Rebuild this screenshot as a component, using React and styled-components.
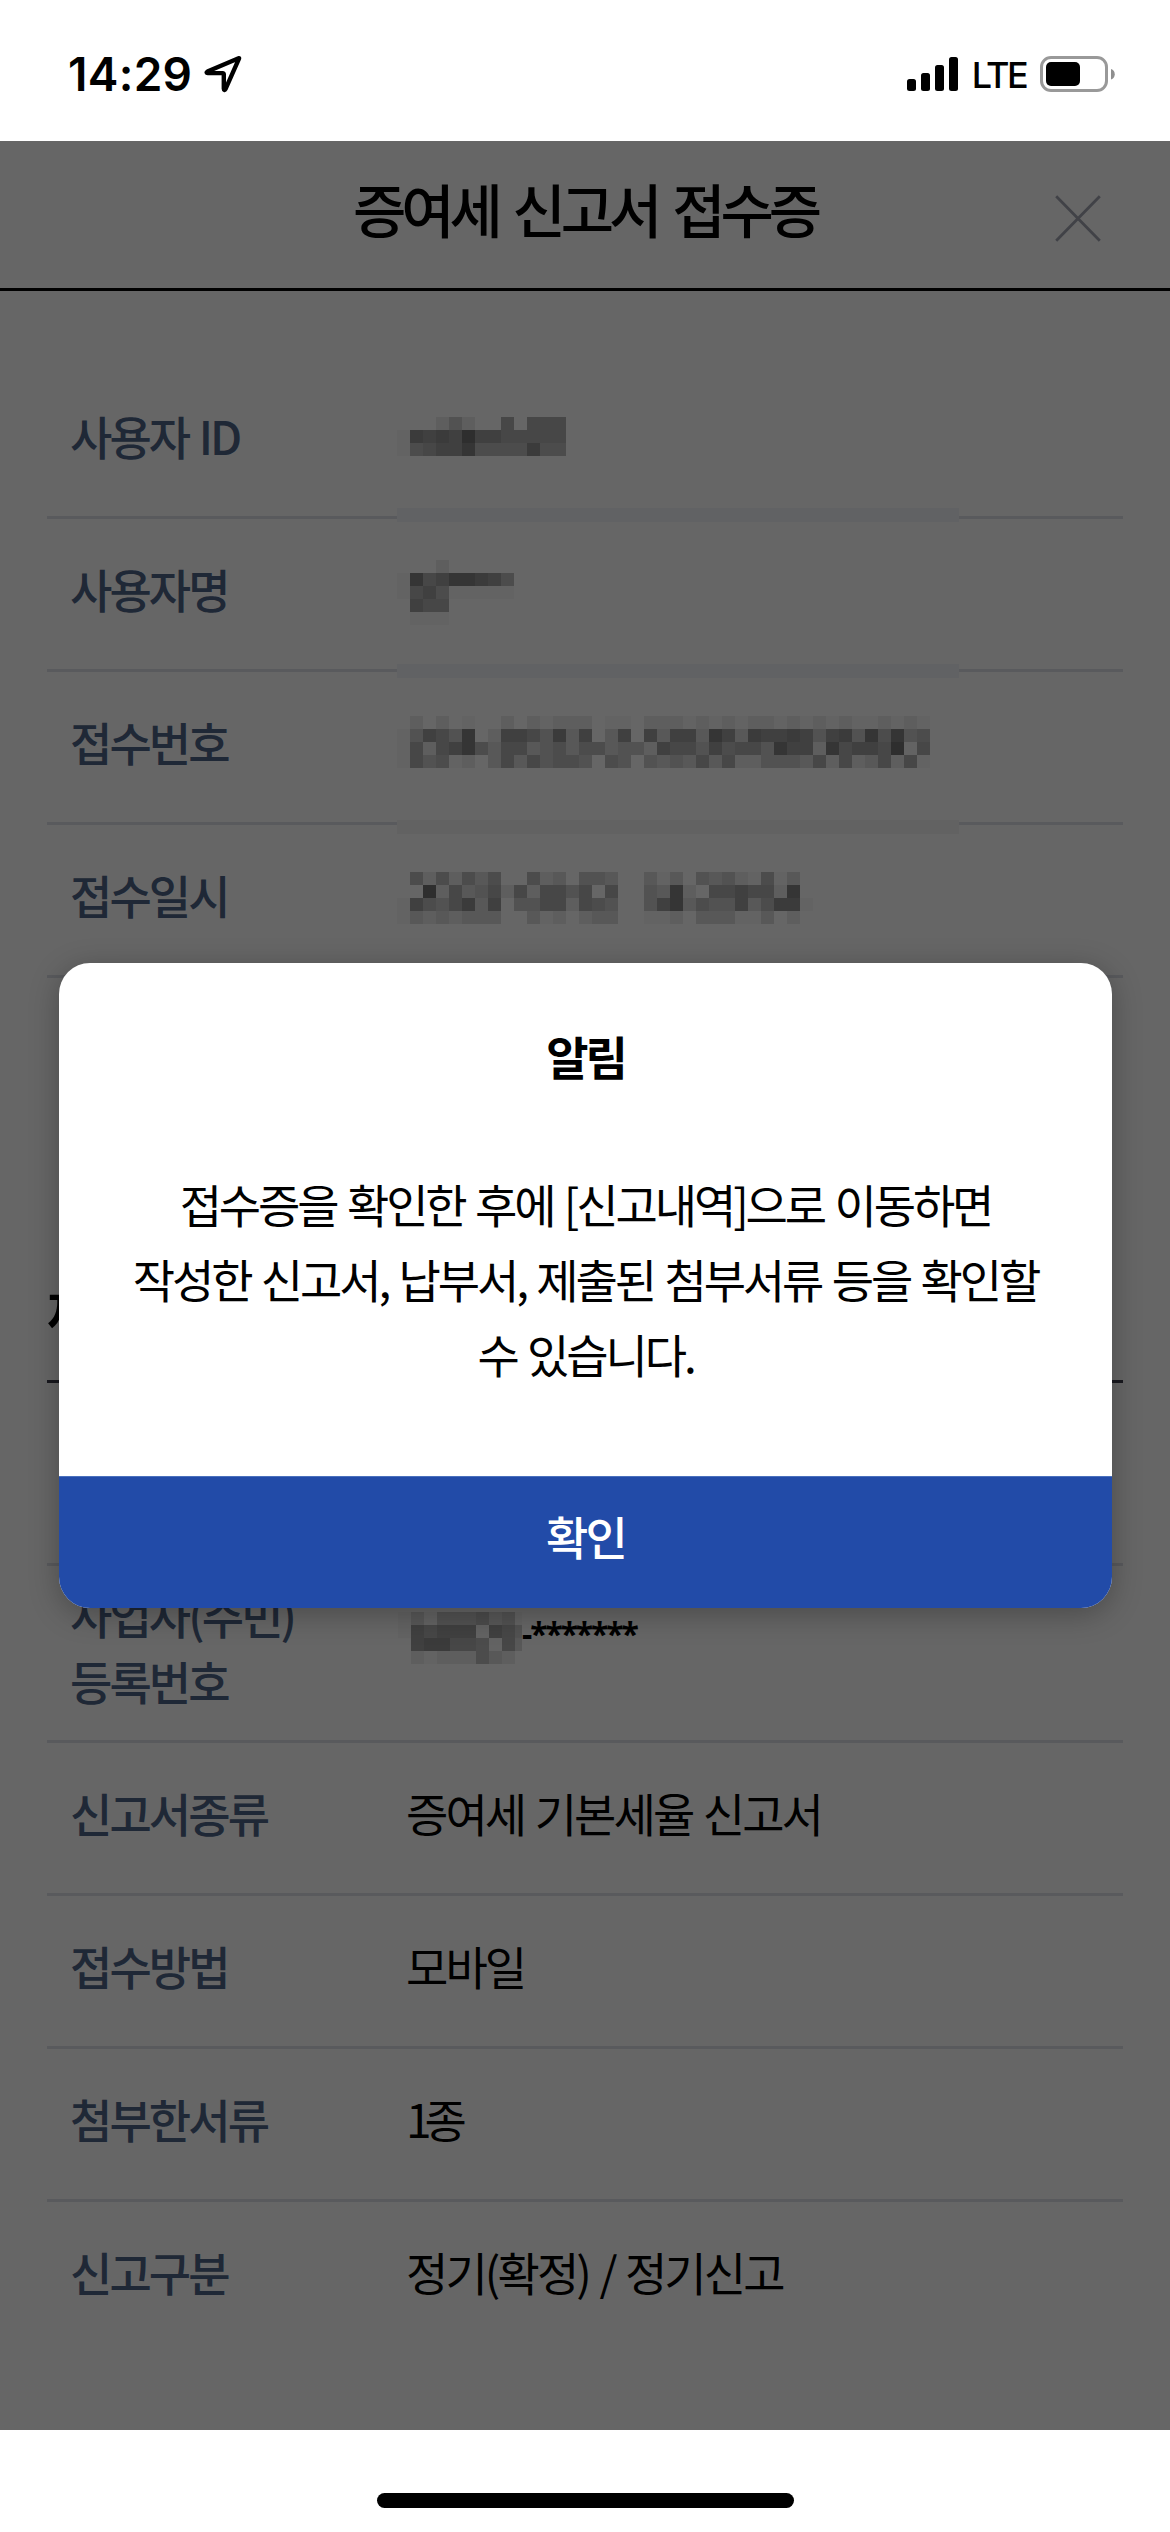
import React from "react";
import styled, { createGlobalStyle } from "styled-components";

const kr = `"Noto Sans CJK KR", "Noto Sans", sans-serif`;

const GlobalStyle = createGlobalStyle`
  * { box-sizing: border-box; }
  body { margin: 0; background: #fff; font-family: ${kr}; color: #000; }
  h1, h2, p, dl, dt, dd { margin: 0; font-weight: 400; }
  button { border: 0; padding: 0; background: none; font: inherit; color: inherit; }
`;

const Screen = styled.div`
  display: flex;
  flex-direction: column;
  width: 1170px;
  height: 2532px;
  overflow: hidden;
  background: #fff;
`;

const StatusBar = styled.div`
  display: flex;
  justify-content: space-between;
  height: 141px;
  padding: 56px 55px 0 68px;
  font-family: Inter, "Liberation Sans", sans-serif;
`;

const StatusGroup = styled.div`
  display: flex;
  align-items: center;
  height: 36px;
  gap: ${(p) => p.$gap}px;
`;

const Clock = styled.span`
  font-size: 46px;
  font-weight: 600;
  line-height: 36px;
  letter-spacing: 0.3px;
`;

const Network = styled.span`
  font-size: 36px;
  font-weight: 500;
  line-height: 38px;
  letter-spacing: -2.6px;
  padding-top: 2px;
`;

const Page = styled.main`
  position: relative;
  display: flex;
  flex-direction: column;
  height: 2289px;
  overflow: hidden;
`;

const Header = styled.header`
  display: grid;
  grid-template-columns: 170px 1fr 170px;
  height: 150px;
  border-bottom: 3px solid #000;
`;

const Title = styled.h1`
  grid-column: 2;
  text-align: center;
  font-size: 58px;
  font-weight: 500;
  line-height: 135px;
  letter-spacing: -5.1px;
  word-spacing: 6.9px;
`;

const CloseButton = styled.button`
  display: flex;
  padding: 54px 0 0 55px;
`;

const Section = styled.section`
  padding: ${(p) => p.$top}px 47px 0;
`;

const SectionTitle = styled.h2`
  height: 402px;
  padding-top: 289px;
  border-bottom: 3px solid #3d3d4c;
  font-size: 50px;
  font-weight: 700;
  line-height: 80px;
  letter-spacing: -5px;
`;

const Row = styled.div`
  display: grid;
  grid-template-columns: 336px 1fr;
  align-items: ${(p) => (p.$tall ? "start" : "center")};
  height: ${(p) => p.$height || 153}px;
  padding: ${(p) => (p.$tall ? "15px 0 0 23px" : "0 0 12px 23px")};
  border-bottom: 3px solid ${(p) => (p.$last ? "transparent" : "#dfe0e8")};
  font-size: 46px;
  line-height: 66px;
  letter-spacing: -2.9px;
  word-spacing: 3px;
`;

const Label = styled.dt`
  font-weight: 500;
  color: #4e6488;
  white-space: pre-line;
`;

const Value = styled.dd`
  font-weight: 400;
  letter-spacing: ${(p) => p.$tracking || -2.9}px;
  color: #000;
`;

const MaskedDigits = styled.span`
  display: block;
  padding: 20px 0 0 116px;
  font-family: "Noto Sans", sans-serif;
  font-size: 32px;
  font-weight: 700;
  letter-spacing: -2.1px;
`;

const Scrim = styled.div`
  position: absolute;
  inset: 0;
  background: rgba(0, 0, 0, 0.6);
`;

const MosaicSvg = styled.svg`
  position: absolute;
  left: ${(p) => p.$x}px;
  top: ${(p) => p.$y}px;
  shape-rendering: crispEdges;
`;

const Dialog = styled.div`
  position: absolute;
  left: 59px;
  top: 822px;
  width: 1053px;
  height: 645px;
  display: flex;
  flex-direction: column;
  border-radius: 31px;
  overflow: hidden;
  background: #fff;
  text-align: center;
  box-shadow: 0 6px 30px rgba(0, 0, 0, 0.28);
`;

const DialogTitle = styled.h2`
  padding-top: 55px;
  font-size: 46px;
  font-weight: 600;
  line-height: 75px;
  letter-spacing: -3px;
`;

const DialogText = styled.p`
  flex: 1;
  padding-top: 73px;
  font-size: 46px;
  font-weight: 400;
  line-height: 75px;
  letter-spacing: -3.1px;
  word-spacing: 3.2px;
  white-space: pre-line;
`;

const Confirm = styled.button`
  height: 132px;
  padding-bottom: 16px;
  background: #224ba8;
  border-top: 1px solid #4a70bd;
  color: #fff;
  font-family: ${kr};
  font-size: 46px;
  font-weight: 500;
  line-height: 66px;
  letter-spacing: -2.9px;
`;

const HomeArea = styled.div`
  display: flex;
  justify-content: center;
  padding: 63px 0 0 1px;
`;

const HomeIndicator = styled.div`
  width: 417px;
  height: 15px;
  border-radius: 8px;
  background: #000;
`;

const CELL = 13;
const SHADES = {
  0: "#2e2e2e", 1: "#353535", 2: "#3b3b3b", 3: "#404040", 4: "#474747",
  5: "#4c4c4c", 6: "#525252", 7: "#585858", 8: "#5e5e5e", 9: "#636363",
};

const receiptCells = [
  [0, "...868..4.444"],
  [1, "9232303344444"],
  [2, "9543315555255"],
  [11, "...8"],
  [12, "914311235"],
  [13, "943599999"],
  [14, ".344"],
  [15, ".999"],
  [23, ".8.8.9..8." + "89888.99.8" + "8898989889" + "89898998989"],
  [24, "963461.833" + "46273.73.3" + "7337137233" + "23632615165"],
  [25, "9484315744" + "7657557668" + "3446354461" + "33814334094"],
  [26, "946598.747" + "46556.56.6" + "7674748866" + "67484874849"],
  [35, ".5858575.." + "587.667..7" + "97.6768959" + "7"],
  [36, "..08476484" + "84464.4..6" + "718.443448" + "1"],
  [37, "93564273.6" + "6448456..6" + "3175663752" + "29"],
  [38, "97878777.." + "798.877..9" + "98.777997." + "8"],
];

const residentCells = [
  [0, "9796665769"],
  [1, "9343339346"],
  [2, ".322445947"],
  [3, ".89888578"],
];

const bands = [
  { y: 91, color: "#616264" },
  { y: 247, color: "#616264" },
  { y: 403, color: "#626262" },
];

function Mosaic({ x, y, width, height, cells, lines = [] }) {
  return (
    <MosaicSvg $x={x} $y={y} width={width} height={height}>
      {lines.map((b) => (
        <rect key={b.y} x="0" y={b.y} width={width} height={CELL + 1} fill={b.color} />
      ))}
      {cells.flatMap(([row, text]) =>
        [...text].map((c, i) =>
          c === "." ? null : (
            <rect key={`${row}-${i}`} x={i * CELL} y={row * CELL} width={CELL} height={CELL} fill={SHADES[c]} />
          )
        )
      )}
    </MosaicSvg>
  );
}

const LocationIcon = () => (
  <svg width="38" height="38" viewBox="0 0 38 38" fill="none">
    <path d="M34.6 3.2 3.4 16.6c-1.2.6-.8 1.5.3 1.5h14.8c.9 0 1.3.4 1.3 1.3v14.4c0 1.4 1.1 1.6 1.7.3L34.9 3.9c.3-.7.2-1-.3-.7Z" stroke="#000" strokeWidth="4.4" strokeLinejoin="round" />
  </svg>
);

const SignalIcon = () => (
  <svg width="51" height="34" viewBox="0 0 51 34">
    <rect x="0" y="22" width="9" height="12" rx="2.5" />
    <rect x="14" y="16" width="9" height="18" rx="2.5" />
    <rect x="28" y="8" width="9" height="26" rx="2.5" />
    <rect x="42" y="0" width="9" height="34" rx="2.5" />
  </svg>
);

const BatteryIcon = () => (
  <svg width="75" height="36" viewBox="0 0 75 36">
    <rect x="1.5" y="1.5" width="65" height="33" rx="9.5" fill="none" stroke="#999" strokeWidth="3" />
    <rect x="6" y="6" width="34" height="24" rx="5" />
    <path d="M71 13c5 1.4 5 9 0 10.4Z" fill="#8f8f8f" />
  </svg>
);

const receiptRows = ["사용자 ID", "사용자명", "접수번호", "접수일시"];
const reportRows = [
  { label: "신고서종류", value: "증여세 기본세율 신고서" },
  { label: "접수방법", value: "모바일" },
  { label: "첨부한서류", value: "1종", tracking: -7 },
  { label: "신고구분", value: "정기(확정) / 정기신고" },
];

export default function App() {
  return (
    <Screen>
      <GlobalStyle />
      <StatusBar>
        <StatusGroup $gap={12}>
          <Clock>14:29</Clock>
          <LocationIcon />
        </StatusGroup>
        <StatusGroup $gap={14}>
          <SignalIcon />
          <Network>LTE</Network>
          <BatteryIcon />
        </StatusGroup>
      </StatusBar>
      <Page>
        <Header>
          <Title>증여세 신고서 접수증</Title>
          <CloseButton aria-label="닫기">
            <svg width="46" height="47" viewBox="0 0 46 47">
              <path d="M1.2 1.2 44.8 45.8M44.8 1.2 1.2 45.8" stroke="#a2a5b2" strokeWidth="2.8" />
            </svg>
          </CloseButton>
        </Header>
        <Section as="dl" $top={75}>
          {receiptRows.map((label) => (
            <Row key={label}>
              <Label>{label}</Label>
              <Value />
            </Row>
          ))}
        </Section>
        <Section $top={3}>
          <SectionTitle>제출내역</SectionTitle>
          <Row $height={183} />
          <Row $height={177} $tall>
            <Label>{"사업자(주민)\n등록번호"}</Label>
            <Value>
              <MaskedDigits>-*******</MaskedDigits>
            </Value>
          </Row>
          {reportRows.map(({ label, value, tracking }, i) => (
            <Row key={label} $last={i === reportRows.length - 1}>
              <Label>{label}</Label>
              <Value $tracking={tracking}>{value}</Value>
            </Row>
          ))}
        </Section>
        <Scrim />
        <Mosaic x={397} y={276} width={562} height={507} cells={receiptCells} lines={bands} />
        <Mosaic x={398} y={1471} width={124} height={52} cells={residentCells} />
        <Dialog role="alertdialog">
          <DialogTitle>알림</DialogTitle>
          <DialogText>
            {"접수증을 확인한 후에 [신고내역]으로 이동하면\n작성한 신고서, 납부서, 제출된 첨부서류 등을 확인할\n수 있습니다."}
          </DialogText>
          <Confirm>확인</Confirm>
        </Dialog>
      </Page>
      <HomeArea>
        <HomeIndicator />
      </HomeArea>
    </Screen>
  );
}
